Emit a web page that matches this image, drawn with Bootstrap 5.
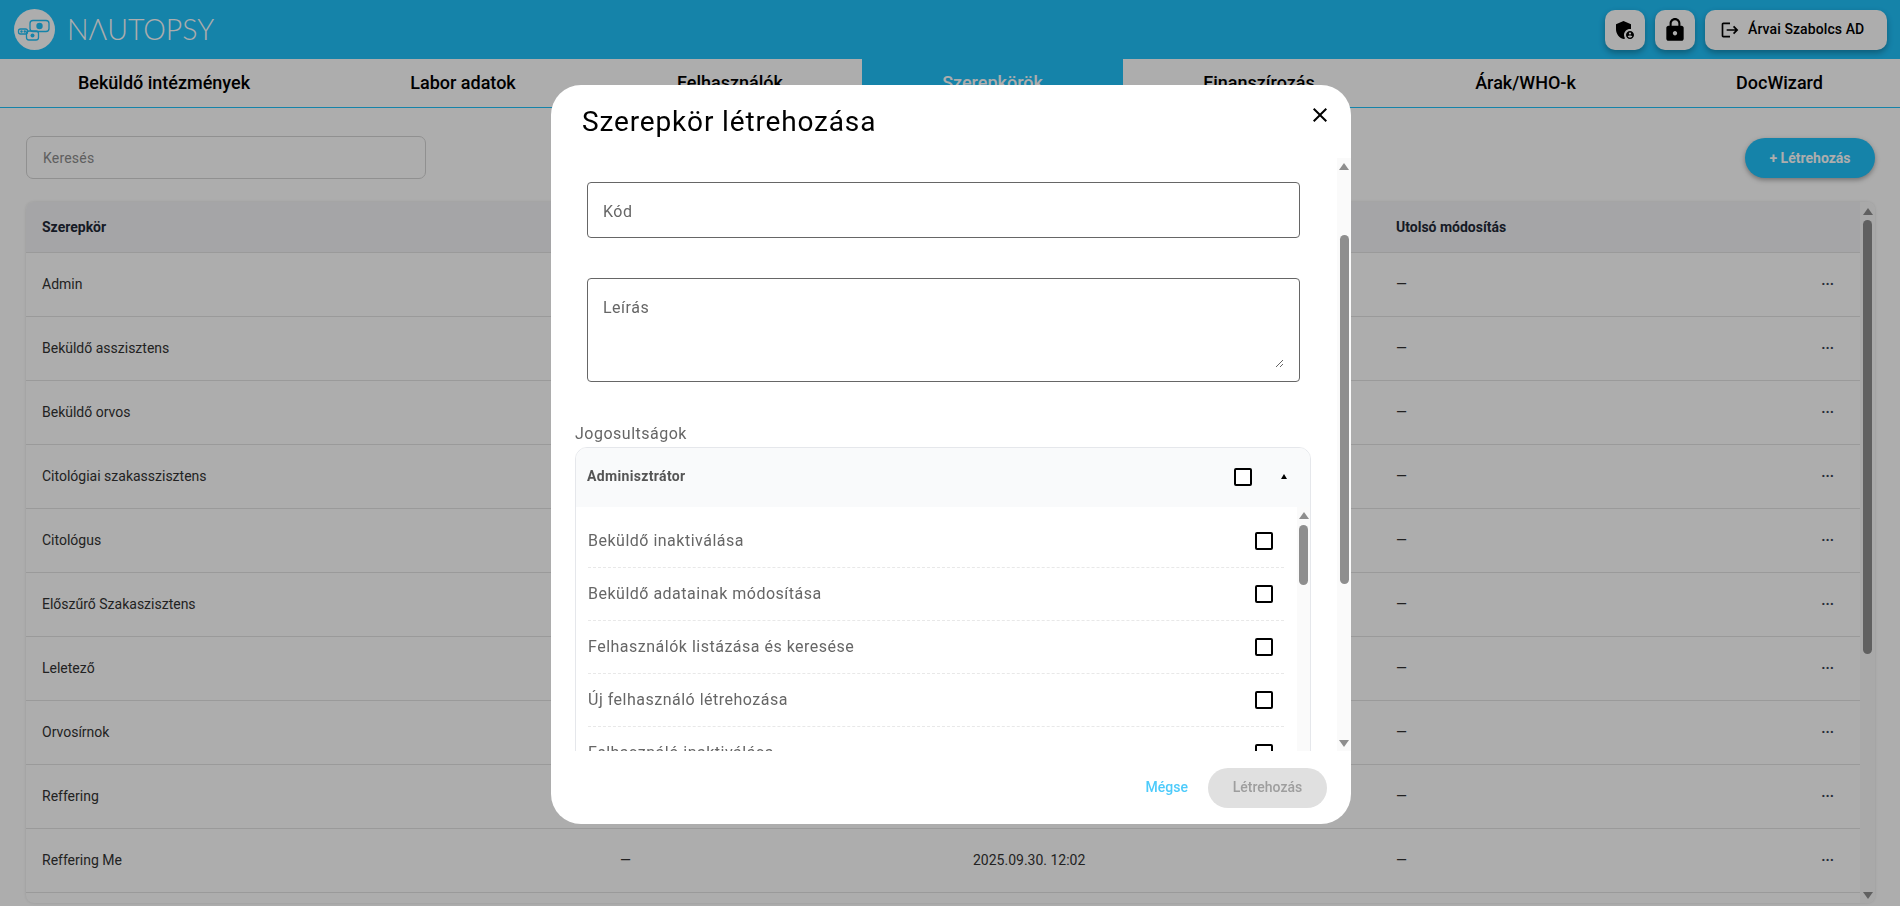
<!doctype html>
<html lang="hu">
<head>
<meta charset="UTF-8" />
<meta name="viewport" content="width=device-width, initial-scale=1.0" />
<title>Nautopsy - Szerepkörök</title>
<link href="https://cdn.jsdelivr.net/npm/bootstrap@5.3.0/dist/css/bootstrap.min.css" rel="stylesheet" />
<style>
    html, body { height: 100%; overflow: hidden; }
    body { font-family: Roboto, "Liberation Sans", sans-serif; font-size: 14px; color: #333; background: #fff; }

    /* top bar */
    .top-bar { height: 59px; background: #1fc1fa; padding: 0 13px 0 14px; }
    .logo-word { font-family: Lato, Roboto, sans-serif; font-weight: 300; font-size: 28.5px; line-height: 1; color: #fff; margin-left: 12px; }
    .top-actions { gap: 10px; }
    .top-btn { height: 40px; min-width: 40px; padding: 0; border: 0; border-radius: 10px; background: #fff; color: #000; box-shadow: 0 3px 6px rgba(0,0,0,.3); display: flex; align-items: center; justify-content: center; }
    .top-user { width: 182px; font-weight: 500; font-size: 14px; letter-spacing: .1px; gap: 8px; justify-content: flex-start; padding-left: 15px; }

    /* tabs */
    .tab-bar { height: 49px; border-bottom: 1px solid #1fc1fa; display: grid; grid-template-columns: 328px 270px 264px 261px 272px 261px 1fr; }
    .tab-bar .nav-link { height: 48px; padding: 0 0 2px; display: flex; align-items: center; justify-content: center; font-size: 18px; font-weight: 500; color: #000; border-radius: 0; }
    .tab-bar .nav-link.active { background: #1fc1fa; color: #fff; }
    .tab-bar .nav-item:last-child { padding-left: 3px; }

    /* page */
    .page-main { padding: 28px 25px 0 26px; }
    .search-box { width: 400px; height: 43px; border-radius: 7px; border: 1px solid #d5d5d5; padding: 0 16px; font-size: 14px; letter-spacing: .2px; color: #333; }
    .search-box::placeholder { color: #8c8c8c; opacity: 1; }
    .create-btn { width: 130px; height: 40px; border: 0; border-radius: 20px; background: #1fc1fa; color: #fff; font-weight: 700; font-size: 14px; box-shadow: 0 2px 5px rgba(0,0,0,.35); margin-top: 2px; }
    .role-card { height: 701px; margin-top: 23px; border-radius: 8px; overflow: hidden; box-shadow: 0 0 3px rgba(0,0,0,.12); }
    .role-table { table-layout: fixed; width: 100%; margin: 0; }
    .role-table th, .role-table td { padding: 1px 16px 0; vertical-align: middle; font-size: 14px; border-bottom: 1px solid #e4e4e4; color: #333; background: transparent; box-shadow: none; }
    .role-table th { height: 50px; padding-top: 2px; background: #f3f4f6; font-weight: 700; color: #1f2937; }
    .role-table td { height: 64px; }
    .role-table .cell-more { text-align: right; padding-right: 26px; font-weight: 700; color: #374151; }

    /* scrollbars */
    .fake-scroll { flex: none; display: flex; flex-direction: column; align-items: center; background: #fafafa; }
    .fake-scroll .arrow-up, .fake-scroll .arrow-down { flex: none; width: 0; height: 0; border-left: 5px solid transparent; border-right: 5px solid transparent; }
    .fake-scroll .arrow-up { border-bottom: 7px solid #8e8e8e; }
    .fake-scroll .arrow-down { border-top: 7px solid #8e8e8e; }
    .fake-scroll .scroll-track { flex: 1 1 auto; width: 100%; display: flex; justify-content: center; min-height: 0; }
    .fake-scroll .scroll-thumb { background: #8e8e8e; border-radius: 5px; }
    .page-scroll { width: 15px; padding: 6px 0 4px; }
    .page-scroll .scroll-thumb { width: 9px; height: 434px; margin-top: 5px; }

    /* dialog */
    .dialog-backdrop { position: fixed; inset: 0; background: rgba(0,0,0,.32); padding: 85px 0 0 2px; }
    .dialog-box { width: 800px; height: 739px; background: #fff; border-radius: 30px; overflow: hidden; }
    .dialog-head { height: 73px; padding: 19px 19px 0 31px; }
    .dialog-title { font-size: 28px; font-weight: 400; line-height: 36px; letter-spacing: .85px; color: #000; margin: 0; }
    .dialog-close { border: 0; background: none; padding: 0; width: 24px; height: 24px; margin-top: -1px; line-height: 0; }
    .dialog-body { height: 593px; }
    .dialog-scroller { flex: 1 1 auto; min-width: 0; overflow: hidden; padding: 24px 26px 0 24px; }
    .dialog-scroll { width: 14px; padding: 5px 0 4px; }
    .dialog-scroll .scroll-thumb { width: 9px; height: 349px; margin-top: 65px; }
    .field-input { display: block; width: 713px; height: 56px; margin: 0 0 40px 12px; border: 1px solid #666; border-radius: 4px; padding: 2px 15px 0; font-size: 16px; letter-spacing: .5px; color: #333; }
    .field-input::placeholder, .field-area textarea::placeholder { color: #666; opacity: 1; }
    .field-area { width: 713px; height: 104px; margin-left: 12px; border: 1px solid #666; border-radius: 4px; padding: 17px 15px 13px; }
    .field-area textarea { display: block; width: 100%; height: 72px; padding: 0; border: 0; outline: 0; font-size: 16px; line-height: 24px; letter-spacing: .5px; color: #333; resize: both; }
    .perm-label { margin: 40px 0 1px; font-size: 16px; line-height: 24px; letter-spacing: .5px; color: #666; font-weight: 400; display: block; }
    .perm-box { border: 1px solid #e5e7eb; border-radius: 12px 12px 0 0; overflow: hidden; height: 400px; }
    .perm-head { height: 59px; padding: 0 23px 2px 11px; background: #f9fafb; font-weight: 700; font-size: 14px; letter-spacing: .35px; color: #555; }
    .perm-head .perm-check { margin-right: 29px; }
    .perm-caret { width: 0; height: 0; border-left: 3px solid transparent; border-right: 3px solid transparent; border-bottom: 5px solid #000; }
    .perm-list { flex: 1 1 auto; min-width: 0; padding: 8px 13px 0 12px; margin: 0; list-style: none; }
    .perm-list li { height: 53px; border-bottom: 1px dashed #e8e8e8; padding: 0 11px 0 0; font-size: 16px; letter-spacing: .5px; color: #666; }
    .perm-check { flex: none; appearance: none; width: 18px; height: 18px; border: 2px solid #000; border-radius: 2px; background: #fff; margin: 0; }
    .perm-scroll { width: 13px; padding: 5px 0; background: #fafafa; }
    .perm-scroll .scroll-thumb { width: 9px; height: 60px; margin-top: 6px; }
    .dialog-foot { height: 73px; padding: 0 24px 0 0; gap: 20px; }
    .cancel-link { border: 0; background: none; padding: 0; font-size: 14px; font-weight: 500; color: #4dcbfb; }
    .save-btn { width: 119px; height: 40px; border: 0; border-radius: 20px; background: #e0e0e0; color: #9e9e9e; font-size: 14px; font-weight: 500; }
</style>
</head>
<body>
    <header class="top-bar d-flex align-items-center">
        <svg width="41" height="41" viewBox="0 0 41 41" aria-hidden="true">
            <circle cx="20.5" cy="20.5" r="20.5" fill="#fff" />
            <g fill="none" stroke="#1fc1fa" stroke-width="1.3">
                <rect x="16" y="11.5" width="19" height="11" rx="3" />
                <rect x="12.5" y="22" width="12" height="9" rx="2.5" />
                <rect x="4.5" y="20" width="9" height="5" rx="2" />
            </g>
            <circle cx="25.5" cy="17" r="3.2" fill="#1fc1fa" />
            <circle cx="18.5" cy="26.5" r="2" fill="#1fc1fa" />
            <circle cx="7.5" cy="22.5" r="1.2" fill="#1fc1fa" />
            <circle cx="10.8" cy="22.5" r="1.2" fill="#1fc1fa" />
        </svg>
        <span class="logo-word" aria-label="NAUTOPSY">NΛUTOPSY</span>
        <div class="d-flex ms-auto top-actions">
            <button class="top-btn" type="button" aria-label="Admin">
                <svg width="24" height="24" viewBox="0 0 24 24" fill="#000"><path d="M17,11c0.34,0,0.67,0.04,1,0.09V6.27L10.5,3L3,6.27v4.91c0,4.54,3.2,8.79,7.5,9.82c0.55-0.13,1.08-0.32,1.6-0.55C11.41,19.47,11,18.28,11,17C11,13.69,13.69,11,17,11z"/><path d="M17,13c-2.21,0-4,1.79-4,4c0,2.21,1.79,4,4,4s4-1.79,4-4C21,14.79,19.21,13,17,13z M17,14.38c0.62,0,1.12,0.51,1.12,1.12s-0.51,1.12-1.12,1.12s-1.12-0.51-1.12-1.12S16.38,14.38,17,14.38z M17,19.75c-0.93,0-1.74-0.46-2.24-1.17c0.05-0.72,1.51-1.08,2.24-1.08s2.19,0.36,2.24,1.08C18.74,19.29,17.93,19.75,17,19.75z"/></svg>
            </button>
            <button class="top-btn" type="button" aria-label="Jelszó">
                <svg width="26" height="26" viewBox="0 0 24 24" fill="#000"><path d="M18 8h-1V6c0-2.76-2.24-5-5-5S7 3.24 7 6v2H6c-1.1 0-2 .9-2 2v10c0 1.1.9 2 2 2h12c1.1 0 2-.9 2-2V10c0-1.1-.9-2-2-2zm-6 9c-1.1 0-2-.9-2-2s.9-2 2-2 2 .9 2 2-.9 2-2 2zm3.1-9H8.9V6c0-1.71 1.39-3.1 3.1-3.1 1.71 0 3.1 1.39 3.1 3.1v2z"/></svg>
            </button>
            <button class="top-btn top-user" type="button">
                <svg width="20" height="20" viewBox="0 0 24 24" fill="#000"><path d="M17 7l-1.41 1.41L18.17 11H8v2h10.17l-2.58 2.58L17 17l5-5zM4 5h8V3H4c-1.1 0-2 .9-2 2v14c0 1.1.9 2 2 2h8v-2H4V5z"/></svg>
                Árvai Szabolcs AD
            </button>
        </div>
    </header>

    <ul class="nav tab-bar">
        <li class="nav-item"><a class="nav-link" href="#">Beküldő intézmények</a></li>
        <li class="nav-item"><a class="nav-link" href="#">Labor adatok</a></li>
        <li class="nav-item"><a class="nav-link" href="#">Felhasználók</a></li>
        <li class="nav-item"><a class="nav-link active" href="#">Szerepkörök</a></li>
        <li class="nav-item"><a class="nav-link" href="#">Finanszírozás</a></li>
        <li class="nav-item"><a class="nav-link" href="#">Árak/WHO-k</a></li>
        <li class="nav-item"><a class="nav-link" href="#">DocWizard</a></li>
    </ul>

    <main class="page-main">
        <div class="d-flex justify-content-between align-items-start">
            <input class="form-control search-box" type="text" placeholder="Keresés" />
            <button class="create-btn" type="button">+ Létrehozás</button>
        </div>

        <div class="role-card d-flex">
            <div class="flex-grow-1 overflow-hidden">
                <table class="table role-table">
                    <colgroup>
                        <col style="width: 578px" /><col style="width: 353px" /><col style="width: 423px" /><col />
                    </colgroup>
                    <thead>
                        <tr><th>Szerepkör</th><th></th><th></th><th colspan="2">Utolsó módosítás</th></tr>
                    </thead>
                    <tbody id="roleRows"></tbody>
                </table>
            </div>
            <div class="fake-scroll page-scroll">
                <span class="arrow-up"></span>
                <div class="scroll-track"><div class="scroll-thumb"></div></div>
                <span class="arrow-down"></span>
            </div>
        </div>
    </main>

    <div class="dialog-backdrop d-flex justify-content-center align-items-start">
        <div class="dialog-box" role="dialog">
            <div class="dialog-head d-flex justify-content-between align-items-start">
                <h2 class="dialog-title">Szerepkör létrehozása</h2>
                <button class="dialog-close" type="button" aria-label="Bezárás">
                    <svg width="24" height="24" viewBox="0 0 24 24" fill="#000"><path d="M19 6.41L17.59 5 12 10.59 6.41 5 5 6.41 10.59 12 5 17.59 6.41 19 12 13.41 17.59 19 19 17.59 13.41 12z"/></svg>
                </button>
            </div>
            <div class="dialog-body d-flex">
                <div class="dialog-scroller">
                    <input class="field-input" type="text" placeholder="Kód" />
                    <div class="field-area"><textarea placeholder="Leírás"></textarea></div>
                    <label class="perm-label">Jogosultságok</label>
                    <div class="perm-box">
                        <div class="perm-head d-flex align-items-center">
                            <span class="me-auto">Adminisztrátor</span>
                            <input class="perm-check" type="checkbox" aria-label="Adminisztrátor" />
                            <span class="perm-caret"></span>
                        </div>
                        <div class="d-flex">
                            <ul class="perm-list" id="permRows"></ul>
                            <div class="fake-scroll perm-scroll">
                                <span class="arrow-up"></span>
                                <div class="scroll-track"><div class="scroll-thumb"></div></div>
                                <span class="arrow-down"></span>
                            </div>
                        </div>
                    </div>
                </div>
                <div class="fake-scroll dialog-scroll">
                    <span class="arrow-up"></span>
                    <div class="scroll-track"><div class="scroll-thumb"></div></div>
                    <span class="arrow-down"></span>
                </div>
            </div>
            <div class="dialog-foot d-flex justify-content-end align-items-center">
                <button class="cancel-link" type="button">Mégse</button>
                <button class="save-btn" type="button" disabled>Létrehozás</button>
            </div>
        </div>
    </div>

    <script src="https://cdn.jsdelivr.net/npm/bootstrap@5.3.0/dist/js/bootstrap.bundle.min.js"></script>
    <script>
        const roles = ["Admin", "Beküldő asszisztens", "Beküldő orvos", "Citológiai szakasszisztens", "Citológus",
            "Előszűrő Szakaszisztens", "Leletező", "Orvosírnok", "Reffering", "Reffering Me"];
        // the dialog covers the two middle columns on every row but the last
        document.getElementById("roleRows").innerHTML = roles.map((name, i) => {
            const last = i === roles.length - 1;
            return `<tr><td>${name}</td><td>${last ? "—" : ""}</td><td>${last ? "2025.09.30. 12:02" : ""}</td><td>—</td><td class="cell-more">···</td></tr>`;
        }).join("");

        const perms = ["Beküldő inaktiválása", "Beküldő adatainak módosítása", "Felhasználók listázása és keresése",
            "Új felhasználó létrehozása", "Felhasználó inaktiválása"];
        document.getElementById("permRows").innerHTML = perms.map((name) =>
            `<li class="d-flex justify-content-between align-items-center"><span>${name}</span><input class="perm-check" type="checkbox" aria-label="${name}" /></li>`
        ).join("");
    </script>
</body>
</html>
